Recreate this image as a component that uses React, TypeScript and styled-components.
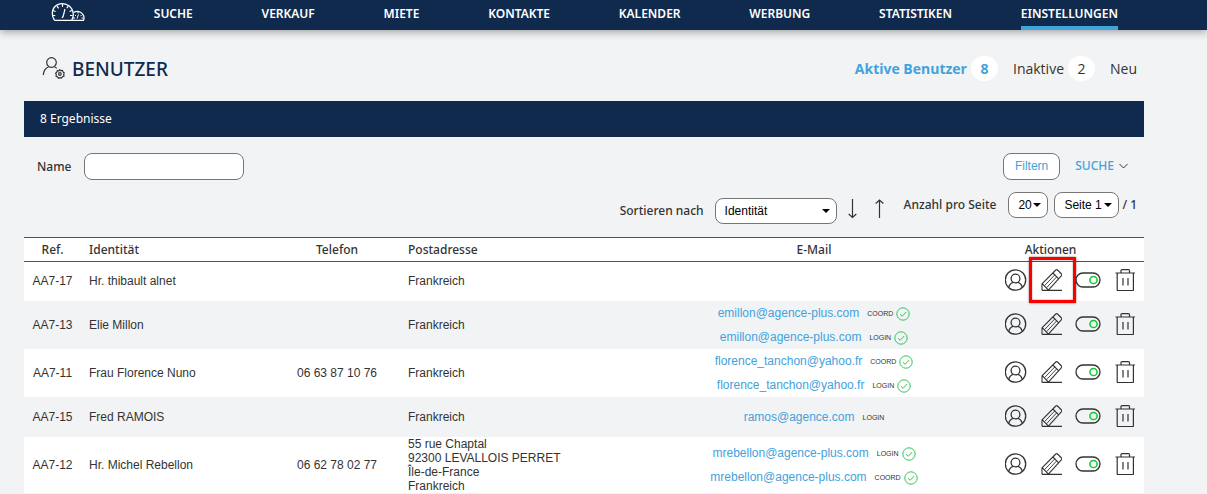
import React from "react";
import styled, { createGlobalStyle, css } from "styled-components";

const navy = "#102a4e";
const blue = "#42a2dc";
const ink = "#333333";
const page = "#f2f3f5";
const sans = `"Liberation Sans", Arial, sans-serif`;
const humanist = `"Noto Sans", "Open Sans", sans-serif`;

const GlobalStyle = createGlobalStyle`
  *, *::before, *::after { box-sizing: border-box; }
  body {
    margin: 0;
    background: ${page};
    color: ${ink};
    font: 12px/14px ${sans};
  }
`;

const TopBar = styled.nav`
  display: flex;
  justify-content: space-between;
  align-items: stretch;
  height: 30px;
  padding: 0 89px 0 51px;
  background: ${navy};
  box-shadow: 0 2px 8px rgba(0, 0, 0, 0.35);
`;

const Logo = styled.svg`
  width: 34px;
  height: 22px;
  fill: none;
  stroke: #ffffff;
`;

const NavLink = styled.a<{ $active?: boolean }>`
  padding-top: 4px;
  border-bottom: 4px solid ${(p) => (p.$active ? blue : "transparent")};
  color: #ffffff;
  font: 600 12px/20px ${humanist};
  text-decoration: none;
`;

const Main = styled.main`
  padding: 0 63px 0 24px;
`;

const TitleRow = styled.header`
  display: flex;
  justify-content: space-between;
  align-items: center;
  height: 71px;
  padding: 6px 7px 0 18px;
`;

const Title = styled.h1`
  display: flex;
  align-items: center;
  gap: 6px;
  margin: 0;
  color: ${navy};
  font: 500 19px/26px ${humanist};
`;

const Tabs = styled.div`
  display: flex;
  align-items: center;
  gap: 15px;
`;

const Tab = styled.a<{ $active?: boolean }>`
  display: flex;
  align-items: center;
  gap: 4px;
  color: ${(p) => (p.$active ? blue : ink)};
  font: ${(p) => (p.$active ? 700 : 400)} 14px/25px "Open Sans", "Noto Sans", sans-serif;
  text-decoration: none;
`;

const Count = styled.span`
  width: 27px;
  border-radius: 13px;
  background: #ffffff;
  text-align: center;
`;

const ResultBar = styled.div`
  padding: 8px 16px;
  background: ${navy};
  color: #ffffff;
  font: 12px/20px ${humanist};
`;

const FilterRow = styled.form`
  display: flex;
  justify-content: space-between;
  align-items: center;
  padding: 16px 16px 12px 13px;
`;

const Group = styled.div<{ $gap: number; $low?: boolean }>`
  display: flex;
  align-items: center;
  gap: ${(p) => p.$gap}px;
  padding-top: ${(p) => (p.$low ? 6 : 0)}px;
`;

const Label = styled.label`
  font: 500 12px/20px ${humanist};
`;

const box = css`
  border: 1px solid #767676;
  border-radius: 8px;
  background: #ffffff;
  font: 12px/14px ${sans};
`;

const TextInput = styled.input`
  ${box}
  width: 160px;
  height: 27px;
  padding: 0 8px;
`;

const FilterButton = styled.button`
  ${box}
  height: 27px;
  padding: 0 11px 1px;
  color: ${blue};
`;

const SearchToggle = styled.button`
  display: flex;
  align-items: center;
  gap: 5px;
  padding: 0 0 2px;
  border: 0;
  background: none;
  color: ${blue};
  font: 500 12px/20px ${humanist};
`;

const SortRow = styled.div`
  display: flex;
  justify-content: flex-end;
  align-items: flex-start;
  gap: 20px;
  padding: 0 7px 13px 0;
`;

const Arrows = styled.div`
  display: flex;
  gap: 18px;
  padding-bottom: 4px;
`;

const PickWrap = styled.span<{ $width: number }>`
  display: grid;
  align-items: center;
  width: ${(p) => p.$width}px;
  > * {
    grid-area: 1 / 1;
  }
  > svg {
    justify-self: end;
    margin-right: 7px;
    pointer-events: none;
  }
`;

const Pick = styled.select`
  ${box}
  width: 100%;
  height: 26px;
  padding: 0 9px;
  color: #000000;
  appearance: none;
`;

const PageTotal = styled.span`
  margin-left: -3px;
  font: 500 12px/20px ${humanist};
`;

const PlainButton = styled.button`
  display: flex;
  padding: 0;
  border: 0;
  background: none;
`;

const Table = styled.table`
  width: 100%;
  table-layout: fixed;
  border-collapse: separate;
  border-spacing: 0;
`;

const Head = styled.th<{ $align?: string }>`
  height: 25px;
  padding: 0 8px;
  border: solid #4a525a;
  border-width: 1px 0;
  background: #ffffff;
  font: 500 12px/20px ${humanist};
  text-align: ${(p) => p.$align ?? "left"};
`;

const Cell = styled.td<{ $align?: string }>`
  padding: 0 8px;
  text-align: ${(p) => p.$align ?? "left"};
`;

const Row = styled.tr`
  height: 40px;
  &:first-child {
    height: 39px;
  }
  &:first-child > ${Cell} {
    padding-bottom: 2px;
  }
  &:nth-child(odd) {
    background: #ffffff;
  }
`;

const MailLine = styled.div`
  display: flex;
  justify-content: center;
  align-items: center;
  height: 24px;
`;

const Mail = styled.a`
  margin-right: 8px;
  color: ${blue};
  text-decoration: none;
`;

const Kind = styled.span`
  display: flex;
  align-items: center;
  gap: 3px;
  padding-top: 2px;
  font-size: 7px;
`;

const Actions = styled.div`
  display: flex;
  justify-content: flex-end;
  align-items: center;
  gap: 13px;
  padding-bottom: 2px;
`;

const ActionButton = styled(PlainButton)<{ $marked?: boolean }>`
  position: relative;
  ${(p) =>
    p.$marked &&
    css`
      &::after {
        content: "";
        position: absolute;
        inset: -12px -14px -12px -11px;
        border: 3px solid #fb0000;
        box-shadow: 0 0 2px rgba(90, 0, 0, 0.6), inset 0 0 2px rgba(90, 0, 0, 0.5);
      }
    `}
`;

const Icon = styled.svg`
  display: block;
  flex: none;
  fill: none;
  stroke: ${ink};
`;

const Caret = () => (
  <svg width="8" height="4" aria-hidden="true">
    <path d="M0 0h8L4 4z" fill="#000" />
  </svg>
);

const Speedometers = () => (
  <Logo viewBox="0 0 34 22" aria-label="Start">
    <path d="M3.5 20.3h29c.7-1.600.6-3.400-.1-5-1.500-3-5-4.600-8-3.600-.7.2-1.300.5-1.900.9" strokeWidth="1.300" />
    <path d="M3.500 20.300C-.4 14 1.300 7.500 6.300 4.900 11.400 2.200 18 4 20.600 8.600c2.200 3.700 2 8.100.2 11.700" strokeWidth="1.300" />
    <path d="M14 9l-2 8M11.500 4v3M6 6.200l1.600 2.200M2 10.500l2.600 1M1.600 15.500h2.700M17.300 6.200l-1.500 2M21 10.500l-2.500 1M21.500 15.500H19M11 18l1-1.500" strokeWidth="1.200" />
    <path d="M27.500 14.500l-1.500 4M24 15l1 1M30.500 15l-1 1.200M32 18h-1.500M27 12v1.500M22 18h2" strokeWidth="1" />
  </Logo>
);

const UserGear = () => (
  <Icon width="24" height="24" viewBox="0 1 24 24" strokeWidth="1.200" aria-hidden="true">
    <circle cx="9.500" cy="6.500" r="4.800" />
    <path d="M1.300 19c.2-4.200 2.300-6.900 5.400-8.200M12.300 10.800c1 .4 1.800 1 2.500 1.600" />
    <path d="M17.500 13.800l1.300.8 1.600-.1.600 1.500 1.200 1-.5 1.500.3 1.600-1.500.6-.9 1.300-1.600-.4-1.500.6-.9-1.300-1.500-.6.200-1.600-.7-1.500 1.200-1 .5-1.500 1.600.1z" />
    <circle cx="17.900" cy="18" r="1.300" />
  </Icon>
);

const Chevron = () => (
  <Icon width="9" height="6" viewBox="0 0 9 6" aria-hidden="true">
    <path d="M.5 1l4 4 4-4" />
  </Icon>
);

const Arrow = ({ up }: { up?: boolean }) => (
  <Icon width="9" height="20" viewBox="0 0 9 20" strokeWidth="1.200" aria-hidden="true">
    <path d={up ? "M4.500 19V1M.7 4.500L4.500 1l3.800 3.500" : "M4.500 0v18.500M.7 15l3.800 3.500L8.300 15"} />
  </Icon>
);

const Check = () => (
  <Icon width="14" height="14" viewBox="0 0 14 14" aria-label="bestätigt">
    <g stroke="#35c45a">
      <circle cx="7" cy="7" r="6.200" />
      <path d="M4 7.200l2.200 2.100L10.200 5" />
    </g>
  </Icon>
);

const Profile = () => (
  <Icon width="22" height="22" viewBox="0 0 22 22" strokeWidth="1.300" aria-hidden="true">
    <circle cx="10.500" cy="11" r="10.200" />
    <circle cx="10.500" cy="9.500" r="4.400" />
    <path d="M3.700 18.400c.7-2.800 2.100-4.300 4.600-5M12.700 13.400c2.500.7 3.900 2.200 4.600 5" />
  </Icon>
);

const Pencil = () => (
  <Icon width="22" height="22" viewBox="0 0 22 22" strokeWidth="1.100" strokeLinejoin="round" aria-hidden="true">
    <path d="M2 21.400h20M2 21.400V14.800L15.800 1q.9-.8 1.700 0l4 4q.8.900 0 1.700L8.400 21.200M2.200 14.600l6.200 6.500M12.900 4l5.800 5.800" />
    <path d="M14.800 5.900L4.600 16.600M16.700 7.800L6.500 18.800" strokeWidth="0.900" />
  </Icon>
);

const Toggle = () => (
  <Icon width="26" height="16" viewBox="0 0 26 16" strokeWidth="1.300" aria-hidden="true">
    <rect x="1" y="1" width="24" height="14" rx="7" />
    <circle cx="18.500" cy="8" r="3.600" stroke="#10c832" strokeWidth="1.500" />
  </Icon>
);

const Trash = () => (
  <Icon width="22" height="22" viewBox="0 0 22 22" strokeWidth="1.200" aria-hidden="true">
    <path d="M1.500 4H21M3.200 4v17q0 .6.600.6h15q.6 0 .6-.6V4M7 4V1.600q0-1 1-1h6.500q1 0 1 1V4" />
    <path d="M9 9v7.500M14 9v7.500" />
  </Icon>
);

type MailEntry = { address: string; kind: string; checked?: boolean };
type User = { id: string; name: string; phone?: string; address: string[]; mails: MailEntry[]; marked?: boolean };

const users: User[] = [
  { id: "AA7-17", name: "Hr. thibault alnet", address: ["Frankreich"], mails: [], marked: true },
  {
    id: "AA7-13",
    name: "Elie Millon",
    address: ["Frankreich"],
    mails: [
      { address: "emillon@agence-plus.com", kind: "COORD", checked: true },
      { address: "emillon@agence-plus.com", kind: "LOGIN", checked: true },
    ],
  },
  {
    id: "AA7-11",
    name: "Frau Florence Nuno",
    phone: "06 63 87 10 76",
    address: ["Frankreich"],
    mails: [
      { address: "florence_tanchon@yahoo.fr", kind: "COORD", checked: true },
      { address: "florence_tanchon@yahoo.fr", kind: "LOGIN", checked: true },
    ],
  },
  { id: "AA7-15", name: "Fred RAMOIS", address: ["Frankreich"], mails: [{ address: "ramos@agence.com", kind: "LOGIN" }] },
  {
    id: "AA7-12",
    name: "Hr. Michel Rebellon",
    phone: "06 62 78 02 77",
    address: ["55 rue Chaptal", "92300 LEVALLOIS PERRET", "Île-de-France", "Frankreich"],
    mails: [
      { address: "mrebellon@agence-plus.com", kind: "LOGIN", checked: true },
      { address: "mrebellon@agence-plus.com", kind: "COORD", checked: true },
    ],
  },
];

const navItems = ["SUCHE", "VERKAUF", "MIETE", "KONTAKTE", "KALENDER", "WERBUNG", "STATISTIKEN", "EINSTELLUNGEN"];

export default function App() {
  return (
    <>
      <GlobalStyle />
      <TopBar>
        <Speedometers />
        {navItems.map((item) => (
          <NavLink key={item} href="#" $active={item === "EINSTELLUNGEN"}>
            {item}
          </NavLink>
        ))}
      </TopBar>
      <Main>
        <TitleRow>
          <Title>
            <UserGear />
            BENUTZER
          </Title>
          <Tabs>
            <Tab href="#" $active>
              Aktive Benutzer <Count>8</Count>
            </Tab>
            <Tab href="#">
              Inaktive <Count>2</Count>
            </Tab>
            <Tab href="#">Neu</Tab>
          </Tabs>
        </TitleRow>
        <ResultBar>8 Ergebnisse</ResultBar>
        <FilterRow onSubmit={(e) => e.preventDefault()}>
          <Group $gap={13}>
            <Label htmlFor="name">Name</Label>
            <TextInput id="name" type="text" />
          </Group>
          <Group $gap={15}>
            <FilterButton type="submit">Filtern</FilterButton>
            <SearchToggle type="button">
              SUCHE <Chevron />
            </SearchToggle>
          </Group>
        </FilterRow>
        <SortRow>
          <Group $gap={11} $low>
            <Label htmlFor="sort">Sortieren nach</Label>
            <PickWrap $width={122}>
              <Pick id="sort">
                <option>Identität</option>
              </Pick>
              <Caret />
            </PickWrap>
            <Arrows>
              <PlainButton type="button" aria-label="Absteigend">
                <Arrow />
              </PlainButton>
              <PlainButton type="button" aria-label="Aufsteigend">
                <Arrow up />
              </PlainButton>
            </Arrows>
          </Group>
          <Group $gap={12}>
            <Label htmlFor="count">Anzahl pro Seite</Label>
            <Group $gap={6}>
              <PickWrap $width={40}>
                <Pick id="count">
                  <option>20</option>
                </Pick>
                <Caret />
              </PickWrap>
              <PickWrap $width={65}>
                <Pick aria-label="Seite">
                  <option>Seite 1</option>
                </Pick>
                <Caret />
              </PickWrap>
              <PageTotal>/ 1</PageTotal>
            </Group>
          </Group>
        </SortRow>
        <Table>
          <colgroup>
            <col width="57" />
            <col width="193" />
            <col width="126" />
            <col />
            <col width="286" />
            <col width="187" />
          </colgroup>
          <thead>
            <tr>
              <Head $align="center">Ref.</Head>
              <Head>Identität</Head>
              <Head $align="center">Telefon</Head>
              <Head>Postadresse</Head>
              <Head $align="center">E-Mail</Head>
              <Head $align="center">Aktionen</Head>
            </tr>
          </thead>
          <tbody>
            {users.map((user) => (
              <Row key={user.id}>
                <Cell $align="center">{user.id}</Cell>
                <Cell>{user.name}</Cell>
                <Cell $align="center">{user.phone}</Cell>
                <Cell>
                  {user.address.map((line) => (
                    <div key={line}>{line}</div>
                  ))}
                </Cell>
                <Cell>
                  {user.mails.map((mail) => (
                    <MailLine key={mail.kind}>
                      <Mail href={`mailto:${mail.address}`}>{mail.address}</Mail>
                      <Kind>
                        {mail.kind}
                        {mail.checked && <Check />}
                      </Kind>
                    </MailLine>
                  ))}
                </Cell>
                <Cell>
                  <Actions>
                    <ActionButton type="button" aria-label="Profil">
                      <Profile />
                    </ActionButton>
                    <ActionButton type="button" aria-label="Bearbeiten" $marked={user.marked}>
                      <Pencil />
                    </ActionButton>
                    <ActionButton type="button" aria-label="Aktiv">
                      <Toggle />
                    </ActionButton>
                    <ActionButton type="button" aria-label="Löschen">
                      <Trash />
                    </ActionButton>
                  </Actions>
                </Cell>
              </Row>
            ))}
          </tbody>
        </Table>
      </Main>
    </>
  );
}
